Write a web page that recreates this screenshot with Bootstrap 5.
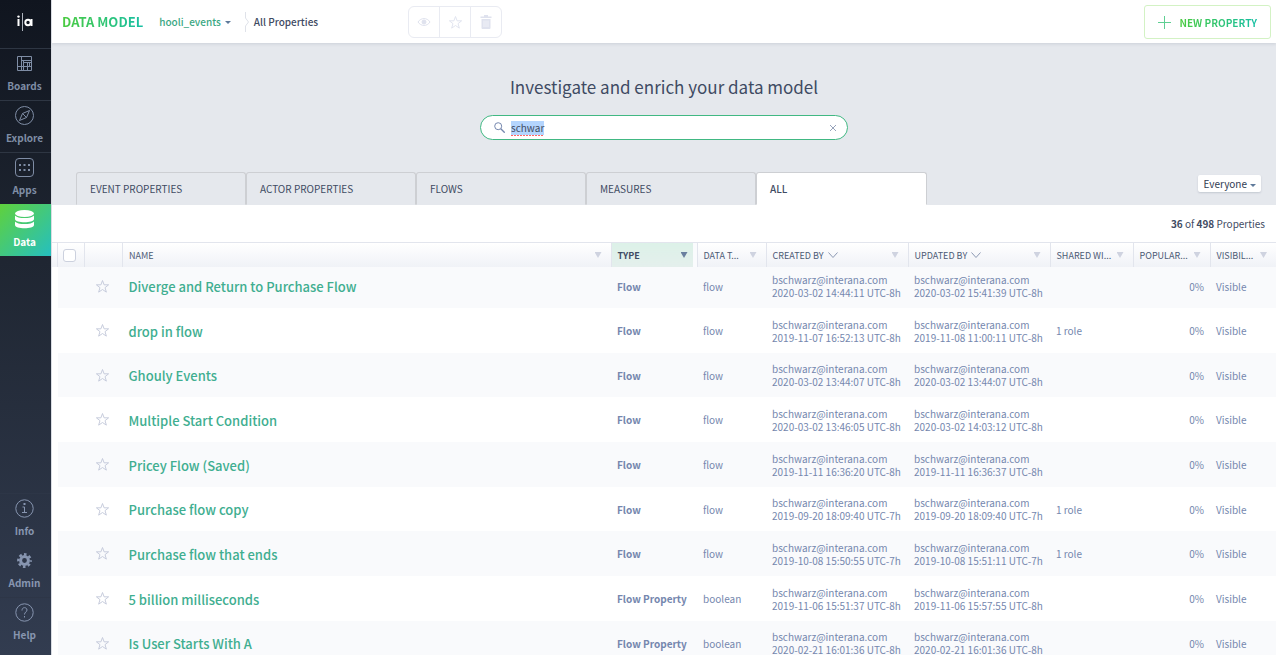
<!DOCTYPE html>
<html lang="en">
<head>
<meta charset="utf-8">
<meta name="viewport" content="width=device-width, initial-scale=1">
<title>Data Model – All Properties</title>
<link href="https://cdn.jsdelivr.net/npm/bootstrap@5.3.0/dist/css/bootstrap.min.css" rel="stylesheet">
<style>
  :root { --ink: #3f4b63; --slate: #7587ae; --leaf: #40ae90; --line: #e2e5ed; }
  body { font-family: "Noto Sans CJK SC", "Source Sans Pro", sans-serif; font-size: 10px; line-height: 13px; color: var(--ink); }
  a { text-decoration: none; }
  svg { display: block; }

  /* Sidebar */
  .rail { width: 52px; background: linear-gradient(#10151f, #1f2632 40%, #323c50); border-right: 1px solid #d9dce2; }
  .rail-logo { height: 48px; padding-right: 2px; padding-bottom: 4px; }
  .rail-item { height: 52px; padding: 5px 2px 0 0; border-top: 1px solid #2e3643; color: #7f8da5; font-weight: 700; }
  .rail-item svg { height: 19px; margin-bottom: 6px; }
  .rail-item.active { background: linear-gradient(135deg, #5fd13c, #25bfc0); border-color: transparent; background-origin: border-box; color: #fff; }
  .rail-foot { padding-bottom: 6px; }
  .rail-foot .rail-item { border-color: #2d3647; color: #8795b0; }

  /* Top bar */
  .topbar { height: 43px; padding: 1px 5px 0 10px; box-shadow: 0 1px 3px rgba(60, 75, 100, .15); }
  .grad-text { background: linear-gradient(90deg, #4bcb3f, #17bfa4); -webkit-background-clip: text; background-clip: text; color: transparent; font-weight: 700; }
  .page-name { font-size: 13px; line-height: 18px; }
  .crumb { font-size: 10px; line-height: 16px; font-weight: 500; color: var(--ink); }
  .crumb-link { border: 0; background: none; padding: 0; margin: 0 14px 0 16px; color: #3aa783; }
  .crumb-link::after { color: #5f7a9b; border-width: 3px 3px 0; margin-left: 4px; vertical-align: 2px; }
  .btn.tool { width: 32px; height: 32px; border: 1px solid #e9ebf2; background: #fff; color: #dfe2ee; opacity: 1; }
  .tools { margin-left: 90px; }
  .btn-new { height: 34px; padding: 0 13px; border: 1px solid #d3f2c4; border-radius: 3px; background: #fff; font-size: 10px; line-height: 13px; gap: 8px; }

  /* Hero */
  .hero { background: #e5e8ed; padding: 31px 0 0 24px; }
  .hero-title { font-size: 17px; line-height: 26px; margin: 0 0 15px; font-weight: 400; }
  .search { width: 368px; height: 25px; border: 1px solid #41b883; border-radius: 13px; padding: 0 10px 0 13px; margin-bottom: 32px; color: var(--slate); }
  .search input { border: 0; outline: 0; padding: 1px 0; margin-left: 6px; font-size: 10px; line-height: 14px; color: var(--ink); background: repeating-linear-gradient(90deg, #f66 0 2px, #fff 2px 3px) left bottom / 33px 1px no-repeat; }
  .search input::selection { background: #b4d5fe; color: var(--ink); }
  .tab-btn { width: 170px; height: 33px; border: 1px solid #cdcfd3; border-bottom-color: #e5e8ed; border-radius: 3px 3px 0 0; background: none; padding: 0 13px; text-align: left; color: var(--ink); }
  .tab-btn.active { width: 171px; background: #fff; border-bottom-color: #fff; font-weight: 500; }
  .scope { height: 17px; margin: 3px 15px 0 0; border: 0; border-radius: 2px; background: #fff; padding: 0 5px; box-shadow: 0 1px 2px rgba(60, 75, 100, .2); color: #2f3b52; line-height: 15px; }
  .scope::after { border-width: 3px 3px 0; vertical-align: 1px; margin-left: 3px; color: #5f7a9b; }
  .tally { height: 37px; padding-right: 11px; }

  /* Property table */
  .grid-wrap { padding-left: 5px; border-top: 1px solid var(--line); background: linear-gradient(#fff, #f0f2f7) top / 100% 24px no-repeat; }
  .props { table-layout: fixed; width: 100%; color: var(--slate); }
  .props th { height: 24px; padding: 0 5px 0 6px; border-left: 1px solid var(--line); font-size: 9px; font-weight: 400; color: #4d5a75; white-space: nowrap; }
  .props th:first-child { padding-left: 5px; }
  .props th.sorted { background: linear-gradient(#dcf1e8, #e4efec); font-weight: 700; box-shadow: inset -4px 0 #fafbfd; color: var(--ink); }
  .props th .filter { width: 7px; height: 6px; flex: none; margin-left: auto; border: 0; padding: 0; background: #cfd3e0; clip-path: polygon(0 0, 100% 0, 50% 100%); }
  .props th.sorted .filter { background: #6a7f9f; }
  .props td { height: 45px; padding: 0 6px; white-space: nowrap; }
  .props tbody tr:nth-child(3n) td { height: 44px; }
  .props tbody tr:first-child td { height: 41px; padding-bottom: 3px; }
  .props tbody tr:nth-child(odd) { background: #f9fafc; }
  .props td.lead-cell { padding-top: 2px; }
  .props td a { font-size: 13px; line-height: 18px; font-weight: 500; color: var(--leaf); }
  .star { border: 0; background: none; padding: 0; margin-left: 4px; color: #c3c9da; }
  .pick { appearance: none; display: block; width: 13px; height: 13px; border: 1px solid #ccd1de; border-radius: 3px; background: #fff; margin: 0; }
  .c-pick { width: 27px; } .c-star { width: 38px; } .c-type { width: 86px; } .c-data { width: 69px; }
  .c-who { width: 142px; } .c-share { width: 83px; } .c-pop { width: 77px; } .c-vis { width: 66px; }
</style>
</head>
<body class="bg-white">
<svg class="d-none">
  <symbol id="star" viewBox="0 0 16 16"><path d="M8 1.600 9.700 6.200h4.800l-3.800 3 1.400 4.800L8 11.200 3.900 14l1.400-4.800-3.800-3h4.800z" fill="none" stroke="currentColor"/></symbol>
</svg>
<div class="d-flex vh-100 overflow-hidden">
  <nav class="rail d-flex flex-column flex-shrink-0 text-center" aria-label="Main">
    <a href="#" class="rail-logo d-flex align-items-center justify-content-center" aria-label="Interana home">
      <svg width="18" height="20" viewBox="0 0 18 20" fill="none" stroke="#fff"><path d="M2.500 7v7" stroke-width="2"/><circle cx="2.500" cy="4.600" r="1.200" fill="#fff" stroke="none"/><path d="M6.500 1v18" stroke="#aeb4bd"/><circle cx="12" cy="10.500" r="2.700" stroke-width="2"/><path d="M15.500 7v7" stroke-width="2"/></svg>
    </a>
    <a href="#" class="rail-item"><svg class="mx-auto" width="19" height="19" viewBox="0 0 19 19" fill="none" stroke="currentColor"><path d="M2.500 2.500h14v14h-14zM6.500 2.500v14M2.500 12.500h4M6.500 6.500h10M6.500 12.500h10M8.500 6.500v6M12.500 8.500v8M8.500 8.500h8M14.500 8.500v4M8.500 12.500v4"/></svg>Boards</a>
    <a href="#" class="rail-item"><svg class="mx-auto" width="19" height="19" viewBox="0 0 19 19" fill="none" stroke="currentColor"><circle cx="9.500" cy="9.500" r="9"/><path d="M14.500 4.500 11.500 11.500 4.500 14.500 7.500 7.500zM7.500 7.500l4 4"/></svg>Explore</a>
    <a href="#" class="rail-item"><svg class="mx-auto" width="19" height="19" viewBox="0 0 19 19" fill="none" stroke="currentColor"><rect x=".5" y=".5" width="18" height="18" rx="3.500"/><path d="M4 7h12M4 12h12" stroke-width="2" stroke-dasharray="2 2.500"/></svg>Apps</a>
    <a href="#" class="rail-item active" aria-current="page"><svg class="mx-auto" width="19" height="19" viewBox="0 0 19 19" fill="currentColor"><ellipse cx="9.500" cy="3.500" rx="9.500" ry="3.500"/><path d="M0 5.500c2 3.400 17 3.400 19 0v3.400c0 4.400-19 4.400-19 0zM0 11.500c2 3.400 17 3.400 19 0v3.400c0 4.400-19 4.400-19 0z"/></svg>Data</a>
    <div class="rail-foot mt-auto">
      <a href="#" class="rail-item d-block"><svg class="mx-auto" width="19" height="19" viewBox="0 0 19 19" fill="none" stroke="currentColor"><circle cx="9.500" cy="9.500" r="8.700"/><path d="M7.500 8h2v5.500M7 13.500h5"/><path d="M9.500 4v2" stroke-width="2"/></svg>Info</a>
      <a href="#" class="rail-item d-block"><svg class="mx-auto" width="19" height="19" viewBox="0 0 19 19" fill="none" stroke="currentColor"><circle cx="9.500" cy="9.500" r="3.900" stroke-width="3"/><circle cx="9.500" cy="9.500" r="6.200" stroke-width="2.400" stroke-dasharray="2.600 2.269" stroke-dashoffset="1.300"/></svg>Admin</a>
      <a href="#" class="rail-item d-block"><svg class="mx-auto" width="19" height="19" viewBox="0 0 19 19" fill="none" stroke="currentColor"><circle cx="9.500" cy="9.500" r="8.700"/><path d="M7 7.500c0-4 5-3.500 5-.5 0 2-2.500 2-2.500 4.500M9.500 13v1.500"/></svg>Help</a>
    </div>
  </nav>

  <main class="flex-grow-1 d-flex flex-column overflow-hidden">
    <header class="topbar d-flex align-items-center flex-shrink-0 position-relative bg-white">
      <span class="page-name grad-text">DATA MODEL</span>
      <button type="button" class="crumb crumb-link dropdown-toggle">hooli_events</button>
      <svg width="5" height="20" viewBox="0 0 5 20" fill="none" stroke="#dfe2e9"><path d="M.5 0v6l3 4-3 4v6"/></svg>
      <span class="crumb ms-1">All Properties</span>
      <div class="btn-group tools" role="group" aria-label="Property actions">
        <button type="button" class="btn tool p-0 d-flex align-items-center justify-content-center" aria-label="View" disabled><svg width="14" height="14" viewBox="0 0 14 14" fill="none" stroke="currentColor"><path d="M1 7c3-4.600 9-4.600 12 0-3 4.600-9 4.600-12 0z"/><circle cx="7" cy="7" r="2" fill="currentColor"/></svg></button>
        <button type="button" class="btn tool p-0 d-flex align-items-center justify-content-center" aria-label="Favorite" disabled><svg width="15" height="15"><use href="#star"/></svg></button>
        <button type="button" class="btn tool p-0 d-flex align-items-center justify-content-center" aria-label="Delete" disabled><svg width="12" height="14" viewBox="0 0 12 14"><path d="M4 0h4v1.500h3.500V3H.5V1.500H4zM1.500 4h9v9q0 1-1 1h-7q-1 0-1-1z" fill="currentColor"/><path d="M4 5.500v6.500M6 5.500v6.500M8 5.500v6.500" stroke="#fff" stroke-width=".6"/></svg></button>
      </div>
      <button type="button" class="btn btn-new ms-auto d-flex align-items-center">
        <svg width="13" height="13" viewBox="0 0 13 13" stroke="#5fcf93"><path d="M6.500 0v13M0 6.500h13"/></svg>
        <span class="grad-text">NEW PROPERTY</span>
      </button>
    </header>

    <section class="hero">
      <h1 class="hero-title text-center pe-4">Investigate and enrich your data model</h1>
      <div class="pe-4">
        <div class="search d-flex align-items-center bg-white mx-auto">
          <svg width="11" height="11" viewBox="0 0 11 11" fill="none" stroke="currentColor"><circle cx="4.200" cy="4.200" r="3.500"/><path d="m6.800 6.800 3.900 3.900" stroke-width="1.300"/></svg>
          <input id="q" class="flex-grow-1" type="text" value="schwar" aria-label="Search properties" spellcheck="false" autocomplete="off">
          <button type="button" class="border-0 bg-transparent p-0" aria-label="Clear search"><svg width="8" height="8" viewBox="0 0 8 8" stroke="#97a3bb"><path d="m1 1 6 6M7 1 1 7"/></svg></button>
        </div>
      </div>
      <div class="d-flex align-items-start">
        <div class="d-flex" role="tablist">
          <button class="tab-btn" role="tab">EVENT PROPERTIES</button>
          <button class="tab-btn" role="tab">ACTOR PROPERTIES</button>
          <button class="tab-btn" role="tab">FLOWS</button>
          <button class="tab-btn" role="tab">MEASURES</button>
          <button class="tab-btn active" role="tab" aria-selected="true">ALL</button>
        </div>
        <button type="button" class="scope dropdown-toggle ms-auto">Everyone</button>
      </div>
    </section>

    <div class="tally d-flex align-items-center justify-content-end flex-shrink-0"><span><b>36</b> of <b>498</b> Properties</span></div>

    <div class="grid-wrap">
      <table class="props">
        <colgroup><col class="c-pick"><col class="c-star"><col><col class="c-type"><col class="c-data"><col class="c-who"><col class="c-who"><col class="c-share"><col class="c-pop"><col class="c-vis"></colgroup>
        <thead>
          <tr>
            <th><input class="pick" type="checkbox" aria-label="Select all"></th>
            <th></th>
            <th><div class="d-flex align-items-center pe-1"><span>NAME</span><button class="filter" aria-label="Filter name"></button></div></th>
            <th class="sorted"><div class="d-flex align-items-center pe-1"><span>TYPE</span><button class="filter" aria-label="Filter type"></button></div></th>
            <th><div class="d-flex align-items-center pe-1"><span>DATA T...</span><button class="filter" aria-label="Filter data type"></button></div></th>
            <th><div class="d-flex align-items-center pe-1"><span>CREATED BY</span><svg class="ms-1" width="10" height="6" viewBox="0 0 10 6" fill="none" stroke="#8c99b3"><path d="m.5.5 4.500 5 4.500-5"/></svg><button class="filter" aria-label="Filter created by"></button></div></th>
            <th><div class="d-flex align-items-center pe-1"><span>UPDATED BY</span><svg class="ms-1" width="10" height="6" viewBox="0 0 10 6" fill="none" stroke="#8c99b3"><path d="m.5.5 4.500 5 4.500-5"/></svg><button class="filter" aria-label="Filter updated by"></button></div></th>
            <th><div class="d-flex align-items-center pe-1"><span>SHARED WI...</span><button class="filter" aria-label="Filter shared with"></button></div></th>
            <th><div class="d-flex align-items-center pe-1"><span>POPULAR...</span><button class="filter" aria-label="Filter popularity"></button></div></th>
            <th><div class="d-flex align-items-center pe-1"><span>VISIBIL...</span><button class="filter" aria-label="Filter visibility"></button></div></th>
          </tr>
        </thead>
        <tbody id="rows"></tbody>
      </table>
    </div>
  </main>
</div>
<script src="https://cdn.jsdelivr.net/npm/bootstrap@5.3.0/dist/js/bootstrap.bundle.min.js"></script>
<script>
  const owner = 'bschwarz@interana.com';
  const properties = [
    ['Diverge and Return to Purchase Flow', 'Flow', 'flow', '2020-03-02 14:44:11 UTC-8h', '2020-03-02 15:41:39 UTC-8h', ''],
    ['drop in flow', 'Flow', 'flow', '2019-11-07 16:52:13 UTC-8h', '2019-11-08 11:00:11 UTC-8h', '1 role'],
    ['Ghouly Events', 'Flow', 'flow', '2020-03-02 13:44:07 UTC-8h', '2020-03-02 13:44:07 UTC-8h', ''],
    ['Multiple Start Condition', 'Flow', 'flow', '2020-03-02 13:46:05 UTC-8h', '2020-03-02 14:03:12 UTC-8h', ''],
    ['Pricey Flow (Saved)', 'Flow', 'flow', '2019-11-11 16:36:20 UTC-8h', '2019-11-11 16:36:37 UTC-8h', ''],
    ['Purchase flow copy', 'Flow', 'flow', '2019-09-20 18:09:40 UTC-7h', '2019-09-20 18:09:40 UTC-7h', '1 role'],
    ['Purchase flow that ends', 'Flow', 'flow', '2019-10-08 15:50:55 UTC-7h', '2019-10-08 15:51:11 UTC-7h', '1 role'],
    ['5 billion milliseconds', 'Flow Property', 'boolean', '2019-11-06 15:51:37 UTC-8h', '2019-11-06 15:57:55 UTC-8h', ''],
    ['Is User Starts With A', 'Flow Property', 'boolean', '2020-02-21 16:01:36 UTC-8h', '2020-02-21 16:01:36 UTC-8h', '']
  ];
  document.getElementById('rows').innerHTML = properties.map(([name, type, data, made, changed, shared]) => `
    <tr><td></td>
      <td class="lead-cell"><button class="star" aria-label="Favorite ${name}"><svg width="15" height="15"><use href="#star"/></svg></button></td>
      <td class="lead-cell"><a href="#">${name}</a></td><td><b>${type}</b></td><td>${data}</td>
      <td>${owner}<br>${made}</td><td>${owner}<br>${changed}</td>
      <td>${shared}</td><td class="text-end">0%</td><td>Visible</td></tr>`).join('');
  const q = document.getElementById('q');
  q.focus();
  q.select();
</script>
</body>
</html>
